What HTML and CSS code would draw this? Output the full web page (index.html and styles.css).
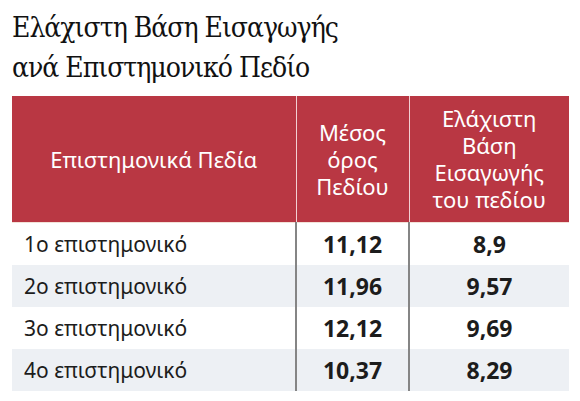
FILE: index.html
```html
<!DOCTYPE html>
<html lang="el">
<head>
<meta charset="utf-8">
<link rel="stylesheet" href="styles.css">
</head>
<body>
<div class="page">
  <h1 class="title">Ελάχιστη Βάση Εισαγωγής<br>ανά Επιστημονικό Πεδίο</h1>
  <table class="grid">
    <colgroup>
      <col class="c1"><col class="c2"><col class="c3">
    </colgroup>
    <thead>
      <tr>
        <th>Επιστημονικά Πεδία</th>
        <th>Μέσος<br>όρος<br>Πεδίου</th>
        <th>Ελάχιστη<br>Βάση<br>Εισαγωγής<br>του πεδίου</th>
      </tr>
    </thead>
    <tbody>
      <tr><td class="name">1ο επιστημονικό</td><td class="num">11,12</td><td class="num">8,9</td></tr>
      <tr class="alt"><td class="name">2ο επιστημονικό</td><td class="num">11,96</td><td class="num">9,57</td></tr>
      <tr><td class="name">3ο επιστημονικό</td><td class="num">12,12</td><td class="num">9,69</td></tr>
      <tr class="alt"><td class="name">4ο επιστημονικό</td><td class="num">10,37</td><td class="num">8,29</td></tr>
    </tbody>
  </table>
</div>
</body>
</html>
```
FILE: styles.css
```css
html, body {
  margin: 0;
  padding: 0;
  background: #ffffff;
}
.page {
  padding: 8px 11px 0 12px;
}
.title {
  margin: 0 0 8px 0;
  font-family: "DejaVu Serif Condensed", "DejaVu Serif", serif;
  font-weight: normal;
  font-size: 28px;
  line-height: 40px;
  color: #111111;
  letter-spacing: -1px;
}
.grid {
  border-collapse: collapse;
  width: 557px;
  table-layout: fixed;
  font-family: "Noto Sans", "Open Sans", sans-serif;
}
.c1 { width: 284px; }
.c2 { width: 113px; }
.c3 { width: 160px; }
.grid th {
  background: #b93743;
  color: #ffffff;
  font-weight: normal;
  font-size: 22px;
  line-height: 27px;
  height: 126px;
  padding: 0 4px;
  text-align: center;
  vertical-align: middle;
  border-left: 1px solid #f2d0d3;
  border-bottom: 1px solid #f3e2d8;
}
.grid th:first-child {
  border-left: none;
}
.grid td {
  height: 42px;
  padding: 0;
  font-size: 21px;
  color: #1c1c1c;
  vertical-align: middle;
}
.grid td + td {
  border-left: 2px solid #858585;
}
.grid .name {
  padding-left: 12px;
}
.grid .num {
  text-align: center;
  font-weight: bold;
  font-size: 23px;
}
.grid tr.alt td {
  background: #edf0f4;
}
```
